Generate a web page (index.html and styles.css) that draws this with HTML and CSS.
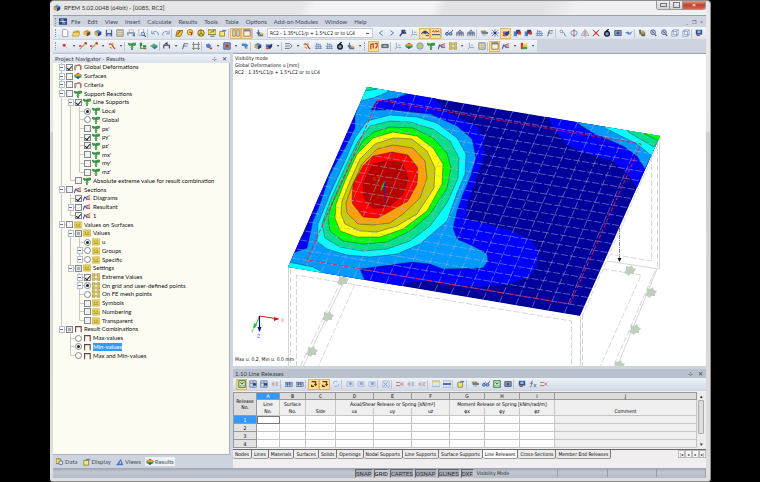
FILE: index.html
```html
<!DOCTYPE html>
<html lang="en">
<head>
    <meta charset="UTF-8">
    <meta name="viewport" content="width=device-width, initial-scale=1.0">
    <title>RFEM 5.02.0048 (64bit) - [0085, RC2]</title>
    <link rel="stylesheet" href="styles.css">
</head>
<body>
    <svg class="defs" aria-hidden="true">
        <symbol id="new" viewBox="0 0 10 10"><path d="M2 .5h4.500l2 2v7H2z" fill="#fff" stroke="#8a93a8"/></symbol>
        <symbol id="open" viewBox="0 0 10 10"><path d="M1 3h3l1-1h4v6H1z" fill="#c9a227"/><path d="M0 9l2-5h8L8 9z" fill="#f3d35c" stroke="#8c7420" stroke-width=".5"/></symbol>
        <symbol id="cubeo" viewBox="0 0 10 10"><path d="M1 3l4-2 4 2v4L5 9 1 7z" fill="#d99a36"/><path d="M5 5l4-2v4L5 9z" fill="#5b5140"/><path d="M0 4h4v3H0z" fill="#e9c26e"/></symbol>
        <symbol id="cubeb" viewBox="0 0 10 10"><path d="M1 3l4-2 4 2v4L5 9 1 7z" fill="#5e8ed0"/><path d="M5 5l4-2v4L5 9z" fill="#27427c"/><path d="M1 3l4 2v4L1 7z" fill="#d9a548"/></symbol>
        <symbol id="save" viewBox="0 0 10 10"><path d="M1 1h8v8H1z" fill="#4a5c92"/><path d="M2.500 1h5v4h-5z" fill="#dfe6f4"/><path d="M3 6.500h4V9H3z" fill="#b9c2d8"/></symbol>
        <symbol id="sheet" viewBox="0 0 10 10"><path d="M1 1h8v8H1z" fill="#f1edd9" stroke="#7b7762"/><path d="M1 2h8M1 4.500h8M1 7h8M4 2v7M6.500 2v7" stroke="#9a957e" stroke-width=".6"/></symbol>
        <symbol id="print" viewBox="0 0 10 10"><path d="M3 1h5v3H3z" fill="#fff" stroke="#7a8296" stroke-width=".6"/><path d="M0 4h10v4H0z" fill="#8d97ad"/><path d="M2 6h6v3H2z" fill="#e8ecf4"/><path d="M7 7h3v2H7z" fill="#3c69b0"/></symbol>
        <symbol id="preview" viewBox="0 0 10 10"><path d="M1 0h6v8H1z" fill="#fff" stroke="#8088a0" stroke-width=".7"/><circle cx="6" cy="6" r="2.200" fill="#cfe0f7" stroke="#3f5f9c"/><path d="M7.500 7.500L10 10" stroke="#3f5f9c" stroke-width="1.400"/></symbol>
        <symbol id="undo" viewBox="0 0 10 10"><path d="M2 5q3-4 7 0v3M1 2v4h4" fill="none" stroke="#8298be" stroke-width="1.200"/></symbol>
        <symbol id="redo" viewBox="0 0 10 10"><path d="M8 5q-3-4-7 0v3M9 2v4H5" fill="none" stroke="#8298be" stroke-width="1.200"/></symbol>
        <symbol id="pencil" viewBox="0 0 10 10"><path d="M1 9l2-7h7L7 9z" fill="#f6dc3a" stroke="#6c5810"/><path d="M3 7l4-5" stroke="#c2271c" stroke-width="1.300"/></symbol>
        <symbol id="find" viewBox="0 0 10 10"><circle cx="5" cy="4" r="3.500" fill="#f8dc43" stroke="#a36a16"/><path d="M4 4h3v4" stroke="#b02a1a" stroke-width="1.200" fill="none"/></symbol>
        <symbol id="target" viewBox="0 0 10 10"><circle cx="5" cy="5" r="4" fill="#f4d43a" stroke="#c8401b" stroke-width="1.200"/><path d="M5 5V1M5 5l3 3M5 5L2 8" stroke="#479f3c" stroke-width="1.400"/></symbol>
        <symbol id="board" viewBox="0 0 10 10"><path d="M0 1h10v6H0z" fill="#f5df48" stroke="#6f6741"/><path d="M3 5l2-2 1 1 2-3M3 9h5" stroke="#3b4b7e" fill="none"/></symbol>
        <symbol id="note" viewBox="0 0 10 10"><path d="M1 3h6v6H1z" fill="#f6e578" stroke="#8a7a2a"/><path d="M4 1h5v2H4z" fill="#6c86b5"/></symbol>
        <symbol id="panel" viewBox="0 0 10 10"><path d="M1 1h3v8H1zM6 1h3v8H6z" fill="#efe7cf" stroke="#7c715b"/></symbol>
        <symbol id="window" viewBox="0 0 10 10"><path d="M1 1h8v8H1z" fill="#f6f0dd" stroke="#7c715b"/><path d="M1 2h8" stroke="#6d7fa6" stroke-width="2"/></symbol>
        <symbol id="load" viewBox="0 0 10 10"><path d="M3 1v5M1 4l2 3 2-3" stroke="#44639c" stroke-width="1.300" fill="none"/><path d="M5 6h4v3H2z" fill="#5e7185"/><circle cx="7" cy="6" r="1.500" fill="#e5bc3a"/></symbol>
        <symbol id="prev" viewBox="0 0 10 10"><path d="M7 2L3 5l4 3" fill="none" stroke="#4477c9" stroke-width="1.200"/></symbol>
        <symbol id="next" viewBox="0 0 10 10"><path d="M3 2l4 3-4 3" fill="none" stroke="#4477c9" stroke-width="1.200"/></symbol>
        <symbol id="result" viewBox="0 0 10 10"><path d="M3 1h5v4H3z" fill="#25395f"/><path d="M1 9l3-4h5" stroke="#2c4272" stroke-width="1.600" fill="none"/><path d="M5 2l2 2" stroke="#93b6e8"/></symbol>
        <symbol id="axes" viewBox="0 0 10 10"><path d="M3 1v6h6M3 7L1 9M5 4h3" stroke="#8fa0bc" fill="none" stroke-width="1.100"/></symbol>
        <symbol id="eye" viewBox="0 0 10 10"><path d="M0 6q5-6 10 0" fill="#6f8fbd" stroke="#283b61"/><circle cx="5" cy="4" r="2" fill="#2d4577"/><path d="M6 8h4" stroke="#b3412a" stroke-width="1.500"/></symbol>
        <symbol id="values" viewBox="0 0 10 10"><path d="M0 4l2-2 1 2 2-2 1 2 2-2 1 2" stroke="#a73b1c" fill="none"/><path d="M0 7h10" stroke="#5a6377" stroke-width="1.500"/></symbol>
        <symbol id="glasses" viewBox="0 0 10 10"><circle cx="2.500" cy="6" r="1.800" fill="#8fb4e6" stroke="#2e4c87"/><circle cx="7" cy="6" r="1.800" fill="#8fb4e6" stroke="#2e4c87"/><path d="M3 4l2-2M8 4l2-3" stroke="#2e4c87"/></symbol>
        <symbol id="frame" viewBox="0 0 10 10"><path d="M1 9V4h8v5M1 6h8M4 4v5M6.500 4v5M3 4l2-3 2 3" stroke="#4c5b78" fill="none"/></symbol>
        <symbol id="layers" viewBox="0 0 10 10"><path d="M1 2h7v2H1z" fill="#a3924a"/><path d="M2 4h8v2H2z" fill="#58616f"/><path d="M3 7h5v1H3z" fill="#8993a5"/></symbol>
        <symbol id="snow" viewBox="0 0 10 10"><path d="M5 0v10M0 5h10M1 1l8 8M9 1L1 9" stroke="#6473c5"/><circle cx="5" cy="5" r="1.600" fill="#2a3572"/></symbol>
        <symbol id="solid" viewBox="0 0 10 10"><path d="M1 3h6v4H1z" fill="#5275b5"/><path d="M3 6l6-4v4L6 9z" fill="#243f78"/><path d="M1 7h4v2H1z" fill="#d84a31"/></symbol>
        <symbol id="solidr" viewBox="0 0 10 10"><path d="M1 3h4v6H1z" fill="#4e7cc0"/><path d="M4 1h5v5H4z" fill="#27407c"/><path d="M6 3h4v4H6z" fill="#c8392c"/></symbol>
        <symbol id="mesh" viewBox="0 0 10 10"><path d="M1 8h9M1 5.500h9M3 3h5M3 1v8M5.500 2v7M8 3v6" stroke="#6484b6" stroke-width=".9"/></symbol>
        <symbol id="flag" viewBox="0 0 10 10"><path d="M2 9l2-7h5M3 5h5" stroke="#56617b" fill="none" stroke-width="1.200"/><path d="M5 2h4v3H5z" fill="#c9d0dd"/></symbol>
        <symbol id="rope" viewBox="0 0 10 10"><circle cx="3" cy="3" r="1.700" fill="none" stroke="#77829b"/><path d="M4 4q4 0 3 4h2" fill="none" stroke="#77829b"/></symbol>
        <symbol id="rotate" viewBox="0 0 10 10"><ellipse cx="5" cy="5" rx="4" ry="3" fill="none" stroke="#5581c6"/><path d="M5 0v10" stroke="#c14a42"/></symbol>
        <symbol id="mirror" viewBox="0 0 10 10"><path d="M4 2v6H0zM6 2v6h4z" fill="#dfe2ea" stroke="#8a93a6" stroke-width=".8"/><path d="M5 0v10" stroke="#c26560" stroke-width=".7"/></symbol>
        <symbol id="cross" viewBox="0 0 10 10"><path d="M1 1l8 8M9 1L1 9" stroke="#4d4c52" stroke-width="1.200"/><path d="M3 3l4 4M7 3L3 7" stroke="#e13b2e" stroke-width="1.600"/></symbol>
        <symbol id="ring" viewBox="0 0 10 10"><circle cx="5" cy="6" r="3" fill="#8494b5" stroke="#101c38" stroke-width="1.600"/><path d="M3 4l4-4" stroke="#101c38" stroke-width="1.600"/></symbol>
        <symbol id="box" viewBox="0 0 10 10"><path d="M1 2h8v6H1z" fill="#9aa6bd" stroke="#354360"/><circle cx="5" cy="5" r="2" fill="#38548f"/></symbol>
        <symbol id="birds" viewBox="0 0 10 10"><path d="M0 4l4-1 2 2 4-3-3 5H4z" fill="#5b87c2"/></symbol>
        <symbol id="tool" viewBox="0 0 10 10"><path d="M1 1h3v3h5v5H4V7H2z" fill="#6d6a55"/><path d="M5 2h3v4H4z" fill="#b5a85c"/></symbol>
        <symbol id="lens" viewBox="0 0 10 10"><circle cx="5" cy="4" r="3" fill="#b8d0f0" stroke="#4c6598" stroke-width="1.100"/><path d="M7 6l2 3" stroke="#4c6598" stroke-width="1.500"/><path d="M4 3l2 2" stroke="#cf3a32" stroke-width="1.400"/></symbol>
        <symbol id="wire" viewBox="0 0 10 10"><path d="M1 3h6v6H1zM1 3l2-2h6v6L7 9M7 3l2-2M3 1v6h6" stroke="#7189b6" fill="#eef2fa" stroke-width=".8"/></symbol>
        <symbol id="monitor" viewBox="0 0 10 10"><path d="M1 1h8v6H1z" fill="#27538e"/><path d="M3 2h4v3H3z" fill="#94b9e8"/><path d="M2 8h4" stroke="#c5372d" stroke-width="1.500"/></symbol>
        <symbol id="node" viewBox="0 0 10 10"><circle cx="4" cy="4" r="1.900" fill="#d8352b"/><path d="M6 6l2 2" stroke="#e4b43a"/></symbol>
        <symbol id="line" viewBox="0 0 10 10"><path d="M1 9l7-8" stroke="#6a8b50" stroke-width="1.100"/><path d="M0 5h3M7 1h2v2" stroke="#cf382c" stroke-width="1.600"/><path d="M5 6l4-3" stroke="#e0b33c"/></symbol>
        <symbol id="arc" viewBox="0 0 10 10"><path d="M1 3q3-2 5 2t3 3" stroke="#cb3a30" stroke-width="1.500" fill="none"/><path d="M6 1v3M2 6l3 2" stroke="#d5a131" stroke-width="1.500"/></symbol>
        <symbol id="support" viewBox="0 0 10 10"><path d="M0 1l4 1 2-1 4 0v3l-3 1-2-1-3 1-2-2z" fill="#3f9a48"/><path d="M5 3v7" stroke="#2f7a38" stroke-width="1.800"/><path d="M3 7h4" stroke="#65b06a"/></symbol>
        <symbol id="supports" viewBox="0 0 10 10"><path d="M1 1h3v4H1zM5 4h4v3H5z" fill="#2f8a38"/><path d="M2 5v3h7" stroke="#54a74f" stroke-width="1.600" fill="none"/><path d="M6 8h3v1H6z" fill="#c33a2c"/></symbol>
        <symbol id="slab" viewBox="0 0 10 10"><path d="M0 5l5-3 5 3-5 3z" fill="#4fae5a"/><path d="M3 7l4-2 3 1-4 3z" fill="#3b74bb"/></symbol>
        <symbol id="member" viewBox="0 0 10 10"><path d="M1 8V4h7v4M5 4V1L2 3" stroke="#33394a" stroke-width="1.300" fill="none"/></symbol>
        <symbol id="grid2" viewBox="0 0 10 10"><path d="M2 0v10M8 0v10M0 3h10M0 8h10" stroke="#787d70" stroke-width="1.100"/></symbol>
        <symbol id="mass" viewBox="0 0 10 10"><path d="M1 3l4-1 3 3-2 3-4-1z" fill="#5180c0"/><path d="M6 7h3v2H6z" fill="#c14a3a"/></symbol>
        <symbol id="redbox" viewBox="0 0 10 10"><path d="M1 1h8v8H1z" fill="#8fa4cc" stroke="#465b8b" stroke-width="1.200"/><path d="M3 3h4v4H3z" fill="#c5372d"/></symbol>
        <symbol id="hand" viewBox="0 0 10 10"><path d="M1 2h5l3 2-2 4H5L4 5H1z" fill="#5584c4"/><path d="M6 6h2v3H6z" fill="#d3a850"/></symbol>
        <symbol id="hinge" viewBox="0 0 10 10"><path d="M0 2h6l3 3-3 3H0M0 5h6" stroke="#6b7a92" fill="none" stroke-width="1.200"/></symbol>
        <symbol id="moment" viewBox="0 0 10 10"><path d="M1 9V3l3-1v6M6 2h3v3L7 8" stroke="#a83224" stroke-width="1.300" fill="none"/></symbol>
        <symbol id="card" viewBox="0 0 10 10"><path d="M1 3h8v4H1z" fill="#7e848c" stroke="#4b5058"/><path d="M3 5h4" stroke="#eee"/></symbol>
        <symbol id="surf" viewBox="0 0 10 10"><path d="M0 4l5-3 5 3-5 2z" fill="#e23b25"/><path d="M0 4l5 1 5-1-1 3-4 1-4-1z" fill="#35b54a"/><path d="M2 6h6L5 9z" fill="#2c56c8"/><path d="M2 3h6v1.500H2z" fill="#f2d53c"/></symbol>
        <symbol id="globe" viewBox="0 0 10 10"><circle cx="5" cy="5" r="4" fill="#a8cf9a" stroke="#6a93c8"/><path d="M2 4q3 3 6-1M4 8l2-6" stroke="#e0b94a" fill="none"/></symbol>
        <symbol id="section" viewBox="0 0 10 10"><path d="M0 9l2-5 3 2" stroke="#3657b8" stroke-width="1.400" fill="none"/><path d="M3 4l6-2M4 7h5M5 5h4" stroke="#a5504e" stroke-width="1.200"/></symbol>
        <symbol id="val" viewBox="0 0 10 10"><path d="M.5 1h9v8h-9z" fill="#ecd35a" stroke="#b39c38" stroke-width=".6"/><path d="M2 4h2M5.500 4h2M2 6.500h6" stroke="#8b7c24"/></symbol>
        <symbol id="vals" viewBox="0 0 10 10"><path d="M0 1h4v3H0zM6 1h4v3H6zM0 6h4v3H0zM6 6h4v3H6z" fill="#e8cd4e" stroke="#8d7c2c" stroke-width=".7"/></symbol>
        <symbol id="deform" viewBox="0 0 10 10"><path d="M1 9V3h7v6" stroke="#6a6f7c" fill="none" stroke-width="1.100"/><path d="M2 9q0-7 4-7t3 6" stroke="#c54a44" fill="none" stroke-width=".9"/></symbol>
        <symbol id="combo" viewBox="0 0 10 10"><path d="M2 9V2h7v7" stroke="#6a4444" fill="none" stroke-width="1.400"/></symbol>
        <symbol id="color" viewBox="0 0 10 10"><path d="M1 1h3v8H1z" fill="#d8332a"/><path d="M3 5l6-4v4L6 9z" fill="#f0cf31"/><path d="M3 6h6v3H3z" fill="#3aa548"/></symbol>
        <symbol id="data" viewBox="0 0 10 10"><path d="M0 1h6v6H0z" fill="#f2d566" stroke="#8c7420"/><circle cx="6" cy="6" r="2.500" fill="#d8e6f8" stroke="#3f5f9c"/></symbol>
        <symbol id="views" viewBox="0 0 10 10"><path d="M0 9L6 1l3 8z" fill="#4d74c4"/><path d="M4 7l2-3v3z" fill="#fff"/></symbol>
        <symbol id="excel" viewBox="0 0 10 10"><path d="M1 1h8v8H1z" fill="#e8f3e6" stroke="#2f7d3a" stroke-width="1.300"/><path d="M3 3l4 4M7 3L3 7" stroke="#2f7d3a" stroke-width="1.300"/></symbol>
        <symbol id="rows" viewBox="0 0 10 10"><path d="M1 1h8v8H1zM1 4h8M5 1v8" stroke="#5a72a2" fill="#dbe4f3"/><path d="M5 4h4v3H5z" fill="#2a4577"/></symbol>
        <symbol id="cols" viewBox="0 0 10 10"><path d="M0 3h9v5H0zM3 3v5M6 3v5" stroke="#4c6496" fill="#dbe4f3"/><path d="M1 5h7" stroke="#20396b"/></symbol>
        <symbol id="faded" viewBox="0 0 10 10"><path d="M1 2h8v6H1z" fill="#d0dbef" stroke="#a4b5d4" stroke-width=".8"/><path d="M4 3h3v3H4z" fill="#7d99cc"/></symbol>
        <symbol id="fadex" viewBox="0 0 10 10"><path d="M1 1h8v8H1z" fill="#dbe3f1" stroke="#9dafd0" stroke-width=".8"/><path d="M2 3l5 5M7 3L2 8" stroke="#6f8cc3"/></symbol>
        <symbol id="del" viewBox="0 0 10 10"><path d="M0 3h5M0 7h5M5 3l4 4M9 3L5 7" stroke="#c1716b" stroke-width="1.200"/></symbol>
        <symbol id="ins" viewBox="0 0 10 10"><path d="M1 5h8M4 2L1 5l3 3" stroke="#c08480" fill="none"/><path d="M6 3h3M6 7h3" stroke="#8f9cb5"/></symbol>
        <symbol id="func" viewBox="0 0 10 10"><path d="M5 1q-2 0-2 3v3q0 2-2 2M1 4h4M6 5l3 4M9 5L6 9" stroke="#5c6b8a" fill="none"/></symbol>
        <symbol id="rowsel" viewBox="0 0 10 10"><path d="M0 1h10v7H0z" fill="#dfe7f5" stroke="#8194b8" stroke-width=".7"/><path d="M0 2h10" stroke="#e8cf5e" stroke-width="2"/></symbol>
        <symbol id="rowblue" viewBox="0 0 10 10"><path d="M0 1h10v8H0z" fill="#dfe7f5" stroke="#8194b8" stroke-width=".7"/><path d="M0 5h10" stroke="#4d6dc4" stroke-width="2.500"/></symbol>
        <symbol id="swap" viewBox="0 0 10 10"><path d="M2 2h5v3M5 8H2V6" stroke="#5c3510" fill="none" stroke-width="1.600"/><path d="M5 5h4L7 8z" fill="#5c3510"/></symbol>
        <symbol id="refresh" viewBox="0 0 10 10"><circle cx="5" cy="5" r="3.500" fill="none" stroke="#9db3da" stroke-width="1.200" stroke-dasharray="8 3"/></symbol>
    </svg>

    <div class="window">
        <header class="titlebar">
            <svg class="app-icon"><use href="#cubeb"/></svg>
            <h1>RFEM 5.02.0048 (64bit) - [0085, RC2]</h1>
            <div class="window-buttons">
                <button class="min" aria-label="Minimize"></button>
                <button class="max" aria-label="Maximize"></button>
                <button class="close" aria-label="Close">×</button>
            </div>
        </header>

        <div class="main">
            <nav class="menubar">
                <span class="grip"></span>
                <svg class="logo" viewBox="0 0 10 8"><path d="M0 0h10v8H0z" fill="#25407c"/><path d="M1 4h8M5 1v6M2 2h2M6 6h2" stroke="#e4ecfa"/></svg>
                <a href="#">File</a>
                <a href="#">Edit</a>
                <a href="#">View</a>
                <a href="#">Insert</a>
                <a href="#">Calculate</a>
                <a href="#">Results</a>
                <a href="#">Tools</a>
                <a href="#">Table</a>
                <a href="#">Options</a>
                <a href="#">Add-on Modules</a>
                <a href="#">Window</a>
                <a href="#">Help</a>
                <div class="doc-buttons">
                    <button aria-label="Minimize document">_</button>
                    <button aria-label="Restore document">❐</button>
                    <button aria-label="Close document">×</button>
                </div>
            </nav>

            <div class="toolbar">
                <span class="grip"></span>
                <div class="tools" data-tools="new open cubeo cubeb save sheet print preview | undo redo | pencil find target board note | panel* window* | load"></div>
                <select class="load-case" aria-label="Load case">
                    <option>RC2 - 1.35*LC1/p + 1.5*LC2 or to LC4</option>
                </select>
                <div class="tools" data-tools="prev next result axes eye* values* | glasses frame frame | layers snow solid* solidr solidr mesh flag | rope rotate mirror cross ring box birds | tool lens lens wire wire | monitor"></div>
            </div>

            <div class="toolbar toolbar-short">
                <span class="grip"></span>
                <div class="tools" data-tools="node v line line v arc v | support supports slab | member v flag grid2 | mass v redbox v hand | cubeb solid v | hinge v arc mesh mesh ring load v"></div>
                <span class="grip"></span>
                <div class="tools" data-tools="moment* card | axes surf globe support section vals v axes sheet | window* section v color v"></div>
            </div>

            <div class="workspace">
                <aside class="navigator">
                    <h2 class="pane-title">Project Navigator - Results <span>⊹</span><span>✕</span></h2>
                    <ul class="tree" id="tree"></ul>
                    <div class="nav-tabs">
                        <button><svg><use href="#data"/></svg>Data</button>
                        <button><svg><use href="#note"/></svg>Display</button>
                        <button><svg><use href="#views"/></svg>Views</button>
                        <button class="active"><svg><use href="#surf"/></svg>Results</button>
                    </div>
                </aside>

                <section class="content">
                    <div class="viewport">
                        <p class="caption">Visibility mode<br>Global Deformations u [mm]<br>RC2 : 1.35*LC1/p + 1.5*LC2 or to LC4</p>
                        <svg class="model" viewBox="233 53 473 313" preserveAspectRatio="xMinYMin slice">
                            <defs>
                                <clipPath id="slabClip"><path d="M367 86L660 135 580 315 288 266z"/></clipPath>
                                <path id="spot" d="M-4-4l3 1 3-2 1 3 3 1-2 3 0 2-4 0-1 2-3-2-2-1 2-3z" fill="#c0cec0"/>
                            </defs>

                            <!-- hidden structure below the slab -->
                            <g stroke="#c4c4c4" fill="none" stroke-width=".7">
                                <path d="M288.500 266v100M580.500 315v51M659.500 135v133M607 260l52 8M657 268L617 366M344 280L303 366"/>
                                <path stroke-dasharray="6 2" d="M290.500 268v98M296.500 366v-92L571.500 320v46M582.500 313v53M657.500 140v126M651.500 147v113L610 253M603 268l38 6L600 366M655 270L613 366M341 280L300 366M355 283L318 366M658 143L583 313"/>
                            </g>
                            <use href="#spot" x="343" y="279"/>
                            <use href="#spot" x="328" y="315"/>
                            <use href="#spot" x="312" y="350"/>
                            <use href="#spot" x="630" y="269"/>
                            <use href="#spot" x="651" y="291"/>
                            <use href="#spot" x="635" y="328"/>
                            <use href="#spot" x="619" y="364"/>

                            <!-- isobands -->
                            <g clip-path="url(#slabClip)" stroke="#10203c" stroke-width=".4">
                                <path fill="#00009c" d="M367 86L660 135 580 315 288 266z"/>
                                <path fill="#0000ff" d="M436 90V98L445 110 460 117 477 125 484 137 485 153 478 173 472 190 467 205 467 218 487 223 513 230 530 238 539 250 537 267 527 277 510 283 480 286 450 283 430 280 412 281 400 285V295L280 275 290 250 306 230 318 195 335 155 350 120 360 80z"/>
                                <path fill="#0099ff" d="M407 88V93L397 97 377 100 371 109 393 109 430 113 457 125 472 138 476 157 470 177 463 193 457 210 453 227 457 238 473 245 487 253 488 260 483 267 443 268 430 263 412 261 360 268 366 282 280 272 290 253 307 247 313 220 320 203 330 173 345 147 355 127 355 115 362 85z"/>
                                <path fill="#00ffff" d="M367 120L390 114 417 116 437 122 457 137 466 153 465 173 457 192 447 220 420 243 397 253 370 256 347 254 327 248 317 240 318 223 330 193 345 160 355 137z"/>
                                <path fill="#00e08a" d="M370 125L390 120 410 121 433 128 450 140 459 157 458 177 447 202 430 225 410 240 387 248 363 250 340 246 325 237 322 223 330 200 348 160 358 140z"/>
                                <path fill="#00ff00" d="M374 131L390 126 413 127 433 137 447 152 451 167 447 187 430 213 410 230 387 241 363 243 343 240 330 230 328 217 332 203 343 180 353 157 363 140z"/>
                                <path fill="#ffff00" d="M373 137L393 131 417 135 433 147 443 163 442 183 427 210 403 228 380 236 357 236 340 230 335 217 336 203 345 180 357 153z"/>
                                <path fill="#cccc00" d="M375 143L393 137 412 138 427 150 435 167 434 187 417 213 397 225 377 231 360 230 345 223 341 213 342 200 350 180 360 158z"/>
                                <path fill="#ffa000" d="M377 148L393 144 413 147 425 160 427 177 420 197 403 213 390 222 373 224 358 223 347 212 346 202 352 185 362 163z"/>
                                <path fill="#ff0000" d="M373 155L392 151 408 154 418 167 417 183 408 200 387 212 378 217 363 216 352 202 353 183 363 165z"/>
                                <path fill="#b80000" d="M373 163L387 160 402 162 408 177 403 193 392 203 385 207 373 207 364 197 363 183z"/>
                                <path fill="#00ffff" d="M360 85L388 88V91L373 97 360 100zM288 261L313 266 326 273 288 268z"/>
                                <path fill="#00e08a" d="M366 85L377 88 365 90z"/>
                                <path fill="#0000ff" d="M548 113V117L557 132 568 145 585 152 613 160 627 173 638 188 665 130z"/>
                                <path fill="#0099ff" d="M577 120V122L593 132 623 145 637 155 645 168 665 130z"/>
                                <path fill="#00ffff" d="M605 124V127L637 143 652 155 665 130z"/>
                                <path fill="#00e08a" d="M628 129V131L654 146 665 130z"/>
                                <path fill="#00ff00" d="M645 131V133L659 140 665 130z"/>
                            </g>

                            <path id="femesh" class="mesh" transform="matrix(16.2 2.700 -3.900 9 367 86)"/>
                            <path d="M378 99L641 143 570 303 307 259z" fill="none" stroke="#ff1040" stroke-width=".9" stroke-dasharray="4 2"/>

                            <g fill="none">
                                <path d="M385 180l18 3" stroke="#e01010" stroke-width=".6"/>
                                <path d="M385 180l-4 9" stroke="#20c020" stroke-width="1.500"/>
                                <path d="M385 180v14" stroke="#2020d0"/>
                                <path d="M259.500 315l19 3" stroke="#e01010"/>
                                <path d="M259.500 315l-5 12" stroke="#20c020"/>
                                <path d="M259.500 315v15" stroke="#101090" stroke-width="1.200"/>
                                <path d="M619.500 227v31" stroke="#555" stroke-width=".7" stroke-dasharray="4 1 1 1"/>
                            </g>
                            <path d="M279 318l-5-2v4z" fill="#e01010"/>
                            <path d="M253 328l1-6 3 2z" fill="#20c020"/>
                            <path d="M259.500 331l-2-5h4z" fill="#101090"/>
                            <path d="M619.500 261l-2-4h4z" fill="#111"/>
                            <g class="axis">
                                <text x="281" y="321" fill="#ff7070">X</text>
                                <text x="251" y="332" fill="#20c020">Y</text>
                                <text x="257" y="337" fill="#5050ff">Z</text>
                                <text x="373" y="180" fill="#b08000">0.2</text>
                                <text x="377" y="197" fill="#208020">Y</text>
                                <text x="383" y="201" fill="#2020d0">Z</text>
                            </g>
                        </svg>
                        <p class="limits">Max u: 0.2, Min u: 0.0 mm</p>
                    </div>

                    <div class="table-pane">
                        <h2 class="pane-title pane-dark">1.10 Line Releases <span>⊹</span><span>✕</span></h2>
                        <div class="toolbar toolbar-table">
                            <div class="tools" data-tools="excel* rows rows ins | cols cols | swap* swap* refresh | faded faded faded | fadex | del ins ins | rowsel rowblue | note | layers glasses excel box | monitor func del"></div>
                        </div>
                        <div class="table-wrap">
                            <table class="sheet">
                                <colgroup>
                                    <col class="c-no"><col class="c-a"><col class="c-b"><col class="c-c">
                                    <col class="c-d"><col class="c-d"><col class="c-d">
                                    <col class="c-g"><col class="c-g"><col class="c-g"><col>
                                </colgroup>
                                <thead>
                                    <tr class="letters">
                                        <th rowspan="3">Release<br>No.</th>
                                        <th class="on">A</th><th>B</th><th>C</th><th>D</th><th>E</th><th>F</th><th>G</th><th>H</th><th>I</th><th>J</th>
                                    </tr>
                                    <tr class="top">
                                        <th>Line</th><th>Surface</th><th></th>
                                        <th colspan="3">Axial/Shear Release or Spring [kN/m²]</th>
                                        <th colspan="3">Moment Release or Spring [kNm/rad/m]</th>
                                        <th></th>
                                    </tr>
                                    <tr class="bottom">
                                        <th>No.</th><th>No.</th><th>Side</th><th>ux</th><th>uy</th><th>uz</th><th>φx</th><th>φy</th><th>φz</th><th>Comment</th>
                                    </tr>
                                </thead>
                                <tbody>
                                    <tr><th class="on">1</th><td class="cursor"></td><td></td><td></td><td></td><td></td><td></td><td></td><td></td><td></td><td></td></tr>
                                    <tr><th>2</th><td></td><td></td><td></td><td></td><td></td><td></td><td></td><td></td><td></td><td></td></tr>
                                    <tr><th>3</th><td></td><td></td><td></td><td></td><td></td><td></td><td></td><td></td><td></td><td></td></tr>
                                    <tr><th>4</th><td></td><td></td><td></td><td></td><td></td><td></td><td></td><td></td><td></td><td></td></tr>
                                </tbody>
                            </table>
                            <div class="scrollbar"><i>▴</i><b></b><i>▾</i></div>
                        </div>
                        <div class="sheet-tabs">
                            <button>Nodes</button>
                            <button>Lines</button>
                            <button>Materials</button>
                            <button>Surfaces</button>
                            <button>Solids</button>
                            <button>Openings</button>
                            <button>Nodal Supports</button>
                            <button>Line Supports</button>
                            <button>Surface Supports</button>
                            <button class="active">Line Releases</button>
                            <button>Cross-Sections</button>
                            <button>Member End Releases</button>
                            <div class="pager">
                                <button aria-label="First">|◂</button>
                                <button aria-label="Previous">◂</button>
                                <button aria-label="Next">▸</button>
                                <button aria-label="Last">▸|</button>
                            </div>
                        </div>
                    </div>
                </section>
            </div>

            <footer class="statusbar">
                <button>SNAP</button>
                <button class="on">GRID</button>
                <button>CARTES</button>
                <button>OSNAP</button>
                <button>GLINES</button>
                <button>DXF</button>
                <span class="mode">Visibility Mode</span>
                <span class="cell"></span>
                <span class="cell"></span>
                <span class="cell"></span>
                <span class="cell"></span>
            </footer>
        </div>
    </div>

    <script src="script.js"></script>
</body>
</html>
```
FILE: styles.css
```css
* {
    box-sizing: border-box;
}
body {
    margin: 0;
    padding: 0 49px 0 50px;
    background: #000;
    font-family: Lato, "Open Sans", sans-serif;
    font-size: 6px;
    line-height: 8px;
    color: #222;
}
h1, h2, p, ul {
    margin: 0;
    padding: 0;
    font-size: inherit;
    font-weight: normal;
}
button, select, input {
    margin: 0;
    padding: 0;
    border: 0;
    font: inherit;
    color: inherit;
    background: none;
}
a {
    color: inherit;
    text-decoration: none;
}
.defs {
    position: absolute;
    width: 0;
    height: 0;
}

/* window frame */
.window {
    display: flex;
    flex-direction: column;
    height: 100vh;
    padding: 0 4px 3px 3px;
    border: 1px solid #8d8d8d;
    border-width: 1px 1px 1px 0;
    border-radius: 4px 4px 3px 3px;
    background: linear-gradient(#e9e9e9, #e4e4e4 130px, #cfcfcf 132px, #dedede);
}
.titlebar {
    display: flex;
    align-items: center;
    height: 14px;
    background: linear-gradient(115deg, #e6e6e6 0 38%, #f3f3f3 40% 58%, #e2e2e2 60% 75%, #f0f0f0 80%);
}
.titlebar h1 {
    flex: 1;
    margin-left: 3px;
    color: #333;
}
.app-icon {
    width: 8px;
    height: 8px;
}
.window-buttons {
    display: flex;
    align-self: flex-start;
    height: 9px;
    border: 1px solid #999;
    border-top: 0;
    border-radius: 0 0 3px 3px;
    overflow: hidden;
}
.window-buttons button {
    display: flex;
    align-items: center;
    justify-content: center;
    width: 13px;
    border-right: 1px solid #999;
    background: linear-gradient(#eee, #d2d2d2);
}
.window-buttons button.close {
    width: 22px;
    border-right: 0;
    color: #fff;
    font-weight: bold;
    background: linear-gradient(#e0a294, #c0412c 50%, #cf6a4e);
}
.min::before, .max::before {
    content: "";
    width: 5px;
    height: 2px;
    border: 1px solid #777;
}
.max::before {
    height: 4px;
}
.main {
    flex: 1;
    display: flex;
    flex-direction: column;
    min-height: 0;
    background: #cdd3df;
}

/* menu and toolbars */
.menubar {
    display: flex;
    align-items: center;
    gap: 7px;
    height: 12px;
    padding: 0 3px 0 2px;
    border-top: 1px solid #9b9fa8;
    color: #454b58;
}
.grip {
    width: 2px;
    height: 8px;
    margin-right: 2px;
    border-left: 1px dotted #8e98ab;
}
.menubar .grip {
    margin-right: -5px;
}
.logo {
    width: 8px;
    height: 7px;
    margin-right: -3px;
}
.doc-buttons {
    display: flex;
    gap: 4px;
    margin-left: auto;
    font-size: 5px;
}
.toolbar {
    display: flex;
    align-items: center;
    height: 13px;
    padding: 0 2px;
    background: linear-gradient(#f3f6fa, #dde3ec);
    border-bottom: 1px solid #cdd3df;
}
.toolbar-short {
    align-self: flex-start;
    padding-right: 0;
}
.toolbar-short .grip + .tools {
    margin-right: 1px;
}
.tools {
    display: flex;
    align-items: center;
}
.tool {
    display: flex;
    align-items: center;
    justify-content: center;
    width: 11px;
    height: 11px;
}
.tool svg {
    width: 8px;
    height: 8px;
}
.tool.on {
    border: 1px solid #e3b566;
    background: #ffdf9c;
}
.drop {
    width: 7px;
    font-size: 4px;
    text-align: center;
    color: #333;
}
.sep {
    width: 2px;
    height: 9px;
    border-left: 1px solid #bcc4d2;
}
.toolbar-table .sep {
    width: 3px;
}
.toolbar-table {
    background: linear-gradient(#eef2f8, #d3dbe7);
    padding-left: 3px;
}
.load-case {
    width: 106px;
    height: 10px;
    margin: 0 2px;
    padding: 0 2px;
    border: 1px solid #c3cad6;
    background: #fff;
    color: #111;
    font-family: "DejaVu Sans Condensed", "Liberation Sans", sans-serif;
    font-size: 5px;
    appearance: none;
    background-image: linear-gradient(#555, #555);
    background-size: 3px 1px;
    background-repeat: no-repeat;
    background-position: right 3px center;
}

/* navigator */
.workspace {
    flex: 1;
    display: grid;
    grid-template-columns: 177px 1fr;
    gap: 3px;
    min-height: 0;
}
.navigator {
    display: flex;
    flex-direction: column;
    min-height: 0;
}
.pane-title {
    display: flex;
    align-items: center;
    gap: 5px;
    height: 10px;
    padding: 0 3px 0 2px;
    background: linear-gradient(#edf1f8, #dbe1ec);
    color: #3c4350;
}
.pane-title span:first-of-type {
    margin-left: auto;
}
.pane-dark {
    height: 9px;
    background: #b9c1cd;
}
.navigator .pane-title {
    border-top: 1px solid #c2c9d6;
}
.tree {
    flex: 1;
    padding-left: 4px;
    border: 1px solid #aab2c0;
    border-top: 0;
    border-left: 0;
    background: #fcfcf3;
    list-style: none;
}
.tree-rows {
    display: grid;
    grid-auto-rows: 1fr;
    height: 297px;
}
.row {
    display: flex;
    align-items: center;
    min-height: 0;
}
.guide {
    align-self: stretch;
    width: 9px;
    background: linear-gradient(#c8c8c8, #c8c8c8) no-repeat 4px 0 / 0 0;
}
.guide.line {
    background-size: 1px 100%;
}
.guide.half {
    background-size: 1px 50%;
}
.guide.node {
    display: flex;
    align-items: center;
}
.guide.node::after {
    content: "";
    width: 4px;
    height: 1px;
    margin-left: 5px;
    background: #c8c8c8;
}
.guide.box::before {
    content: "";
    width: 5px;
    height: 5px;
    margin-left: 2px;
    border: 1px solid #b4bdcc;
    background: linear-gradient(#6478a4, #6478a4) no-repeat center / 3px 1px #fff;
}
.guide.box::after {
    width: 2px;
    margin-left: 0;
}
.row label {
    display: flex;
    align-items: center;
    color: #111;
}
.row input {
    display: flex;
    align-items: center;
    justify-content: center;
    appearance: none;
    width: 7px;
    height: 7px;
    border: 1px solid #83888f;
    background: #f2f2f2;
}
.row input[type="radio"] {
    border-radius: 50%;
    background: #fff;
}
.row input[type="radio"]:checked::before {
    content: "";
    width: 3px;
    height: 3px;
    border-radius: 50%;
    background: #222;
}
.row input[type="checkbox"]:checked::before {
    content: "";
    width: 2px;
    height: 4px;
    border: solid #222;
    border-width: 0 1px 1px 0;
    transform: rotate(40deg);
}
.row input.mixed {
    background: #a9adb2;
    box-shadow: inset 0 0 0 1px #e4e4e4;
}
.row svg {
    width: 8px;
    height: 8px;
    margin: 0 2px 0 1px;
}
.row .selected {
    background: #3399ff;
    color: #fff;
}
.nav-tabs {
    display: flex;
    align-items: center;
    gap: 3px;
    height: 13px;
    padding-left: 2px;
    color: #4a5160;
}
.nav-tabs button {
    display: flex;
    align-items: center;
    gap: 1px;
    height: 9px;
    padding: 0 1px;
}
.nav-tabs .active {
    background: #eef2f7;
}
.nav-tabs svg {
    width: 8px;
    height: 8px;
}

/* model view */
.content {
    display: flex;
    flex-direction: column;
    min-height: 0;
}
.viewport {
    position: relative;
    flex: 1;
    min-height: 0;
    background: #fff;
    border-top: 1px solid #9aa2b0;
    font-family: "DejaVu Sans Condensed", "Liberation Sans", sans-serif;
    font-size: 5px;
    line-height: 7px;
    color: #111;
}
.caption {
    position: absolute;
    top: 1px;
    left: 2px;
}
.limits {
    position: absolute;
    bottom: 3px;
    left: 2px;
}
.model {
    display: block;
    width: 100%;
    height: 100%;
}
.mesh {
    fill: none;
    stroke: #a9b2c8;
    stroke-width: 1px;
    stroke-dasharray: 7 2;
    stroke-opacity: .5;
    vector-effect: non-scaling-stroke;
}
.axis {
    font-size: 5px;
}

/* table */
.table-pane {
    margin-top: 3px;
    padding-bottom: 9px;
    background: #f0eeee;
}
.table-wrap {
    display: flex;
    padding: 1px 1px 0 0;
}
.sheet {
    flex: 1;
    table-layout: fixed;
    border-collapse: collapse;
    width: 100%;
    font-family: "DejaVu Sans Condensed", "Liberation Sans", sans-serif;
    font-size: 5px;
    line-height: 6px;
    color: #000;
}
.c-no { width: 23px; }
.c-a { width: 23px; }
.c-b { width: 26px; }
.c-c { width: 30px; }
.c-d { width: 38px; }
.c-g { width: 35px; }
.sheet th, .sheet td {
    height: 8px;
    padding: 0;
    border: 1px solid #c4c4c4;
    font-weight: normal;
    text-align: center;
    white-space: nowrap;
    overflow: hidden;
}
.sheet th {
    background: #efefef;
}
.sheet .letters th {
    height: 7px;
    border-color: #999;
    background: #dcdcdc;
}
.sheet .top th {
    border-bottom: 0;
}
.sheet .bottom th {
    border-top: 0;
}
.sheet tbody th {
    background: #e2e2e2;
    border-color: #999;
}
.sheet .letters .on, .sheet tbody .on {
    background: #3399ff;
    color: #fff;
}
.sheet td {
    background: #fff;
}
.sheet td:last-child {
    background: #efefef;
}
.sheet .cursor {
    outline: 1px solid #777;
    outline-offset: -1px;
}
.scrollbar {
    display: flex;
    flex-direction: column;
    width: 8px;
    background: #ececec;
    text-align: center;
    font-size: 5px;
}
.scrollbar i {
    font-style: normal;
}
.scrollbar b {
    flex: 1;
    margin: 0 1px 6px;
    border: 1px solid #aaa;
    border-radius: 1px;
    background: #dcdcdc;
}
.sheet-tabs {
    display: flex;
    margin-top: 1px;
    border-top: 1px solid #666;
    font-family: "DejaVu Sans Condensed", "Liberation Sans", sans-serif;
    font-size: 5px;
    color: #000;
}
.sheet-tabs > button {
    height: 9px;
    padding: 0 2px;
    border-right: 1px solid #777;
    border-bottom: 1px solid #999;
    border-radius: 0 0 2px 2px;
    background: #ececec;
}
.sheet-tabs .active {
    background: #fff;
}
.pager {
    display: flex;
    margin-left: auto;
}
.pager button {
    width: 7px;
    height: 8px;
    border: 1px solid #bbb;
    background: #f6f6f6;
    font-size: 4px;
}

/* status bar */
.statusbar {
    display: flex;
    align-items: center;
    gap: 1px;
    height: 10px;
    padding-left: 302px;
    background: linear-gradient(#9aa3b1, #c3c9d2 40%, #b3bac5);
    font-family: Roboto, sans-serif;
}
.statusbar button {
    height: 9px;
    border: 1px solid #8b929d;
    border-color: #666 #ccc #ccc #666;
    background: #a7aeb9;
    color: #333;
}
.statusbar .on {
    background: #c4cad3;
    color: #111;
}
.statusbar .mode {
    padding-left: 2px;
    font-family: "DejaVu Sans Condensed", "Liberation Sans", sans-serif;
    font-size: 5px;
    white-space: nowrap;
}
.cell {
    flex: 1;
    height: 8px;
    border-right: 1px solid #99a0ab;
}
```
FILE: script.js
```js
// toolbars: "*" marks a pressed button, "|" a separator, "v" a drop-down arrow
document.querySelectorAll('.tools').forEach(function (bar) {
    bar.innerHTML = bar.dataset.tools.split(' ').map(function (t) {
        if (t === '|') return '<span class="sep"></span>';
        if (t === 'v') return '<span class="drop">▾</span>';
        const name = t.replace('*', '');
        return '<button class="tool' + (t !== name ? ' on' : '') + '" aria-label="' + name + '">' +
            '<svg><use href="#' + name + '"/></svg></button>';
    }).join('');
});

// [level, expander, control, icon, text]
// control: c/C checkbox, m mixed checkbox, r/R radio (capital = checked)
const rows = [
    [0, 1, 'C', 'deform', 'Global Deformations'],
    [0, 1, 'c', 'surf', 'Surfaces'],
    [0, 1, 'c', 'deform', 'Criteria'],
    [0, 1, 'c', 'support', 'Support Reactions'],
    [1, 1, 'C', 'support', 'Line Supports'],
    [2, 0, 'R', 'support', 'Local'],
    [2, 0, 'r', 'support', 'Global'],
    [2, 0, 'c', 'support', "px'"],
    [2, 0, 'C', 'support', "py'"],
    [2, 0, 'C', 'support', "pz'"],
    [2, 0, 'c', 'support', "mx'"],
    [2, 0, 'c', 'support', "my'"],
    [2, 0, 'c', 'support', "mz'"],
    [1, 0, 'c', 'support', 'Absolute extreme value for result combination'],
    [0, 1, 'c', 'section', 'Sections'],
    [1, 0, 'C', 'section', 'Diagrams'],
    [1, 1, 'c', 'section', 'Resultant'],
    [1, 0, 'C', 'section', '1'],
    [0, 1, 'c', 'val', 'Values on Surfaces'],
    [1, 1, 'm', 'val', 'Values'],
    [2, 0, 'R', 'val', 'u'],
    [2, 1, 'r', 'val', 'Groups'],
    [2, 1, 'r', 'val', 'Specific'],
    [1, 1, 'm', 'val', 'Settings'],
    [2, 1, 'C', 'vals', 'Extreme Values'],
    [2, 1, 'R', 'vals', 'On grid and user-defined points'],
    [2, 0, 'r', 'vals', 'On FE mesh points'],
    [2, 0, 'c', 'val', 'Symbols'],
    [2, 0, 'c', 'val', 'Numbering'],
    [2, 0, 'c', 'val', 'Transparent'],
    [0, 1, 'm', 'combo', 'Result Combinations'],
    [1, 0, 'r', 'combo', 'Max-values'],
    [1, 0, 'R', 'combo', 'Min-values'],
    [1, 0, 'r', 'combo', 'Max and Min-values']
];

// is there another row on this level before the branch closes?
function continues(index, level) {
    for (let i = index + 1; i < rows.length; i++) {
        if (rows[i][0] < level) return false;
        if (rows[i][0] === level) return true;
    }
    return false;
}

let group = 0;
document.getElementById('tree').innerHTML = '<li class="tree-rows">' + rows.map(function (r, i) {
    const [level, box, control, icon, text] = r;
    let html = '';
    for (let l = 0; l < level; l++) {
        html += '<span class="guide' + (continues(i, l) ? ' line' : '') + '"></span>';
    }
    html += '<span class="guide node' + (box ? ' box' : '') + (continues(i, level) ? ' line' : ' half') + '"></span>';
    if (level < 2) group = level === 1 && !box ? group : i;
    const type = control.toLowerCase() === 'r' ? 'radio' : 'checkbox';
    const checked = control === 'C' || control === 'R' ? ' checked' : '';
    return '<div class="row">' + html + '<label><input type="' + type + '" name="g' + group + '"' +
        (control === 'm' ? ' class="mixed"' : '') + checked + '><svg><use href="#' + icon + '"/></svg><span' +
        (text === 'Min-values' ? ' class="selected"' : '') + '>' + text + '</span></label></div>';
}).join('') + '</li>';

// grid over the slab, 18 x 20 cells
let d = '';
for (let x = 1; x < 18; x++) d += 'M' + x + ' 0V20';
for (let y = 1; y < 20; y++) d += 'M0 ' + y + 'H18';
document.getElementById('femesh').setAttribute('d', d);
```
